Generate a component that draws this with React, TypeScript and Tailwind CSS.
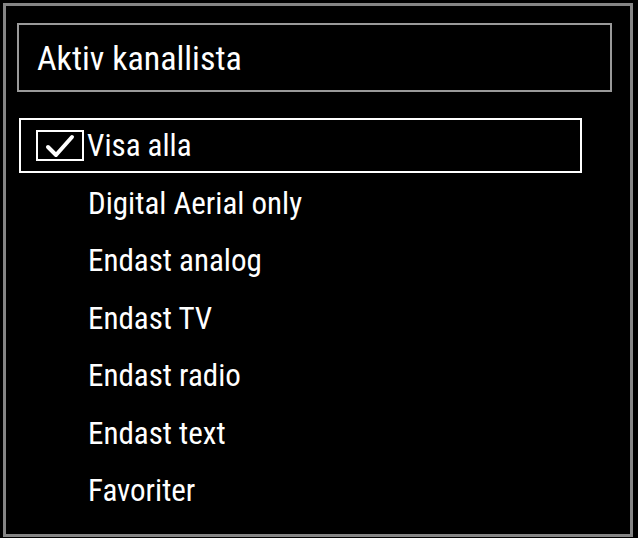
const font = { fontFamily: 'Roboto, sans-serif', fontStretch: 'condensed' }

const items = [
  'Visa alla',
  'Digital Aerial only',
  'Endast analog',
  'Endast TV',
  'Endast radio',
  'Endast text',
  'Favoriter',
]

function CheckBox() {
  return (
    <div className="flex h-[31px] w-[48px] shrink-0 items-center justify-center border-2 border-white">
      <svg width="34" height="26" viewBox="0 0 34 26" fill="none">
        <path d="M5 14 L13 22 L29 4" stroke="white" strokeWidth="4" strokeLinecap="round" strokeLinejoin="round" />
      </svg>
    </div>
  )
}

export default function App() {
  return (
    <div className="h-[538px] w-[638px] bg-black pl-[3px] pt-[3px] text-white" style={font}>
      <div className="flex h-[534px] w-[630px] flex-col border-[3px] border-[#858585] pl-[11px] pt-[17px]">
        <div className="flex h-[69px] w-[595px] items-center border-2 border-[#9a9a9a] pl-[18px]">
          <span className="text-[34px] leading-none">Aktiv kanallista</span>
        </div>
        <div className="mt-[25px] flex flex-col">
          {items.map((item, i) => (
            <div key={item} className="flex h-[57.5px] items-center">
              {i === 0 ? (
                <div className="ml-[2px] flex h-[55px] w-[563px] items-center gap-[3px] border-2 border-white pl-[15px]">
                  <CheckBox />
                  <span className="text-[31px] leading-none">{item}</span>
                </div>
              ) : (
                <span className="pl-[71px] text-[31px] leading-none">{item}</span>
              )}
            </div>
          ))}
        </div>
      </div>
    </div>
  )
}
